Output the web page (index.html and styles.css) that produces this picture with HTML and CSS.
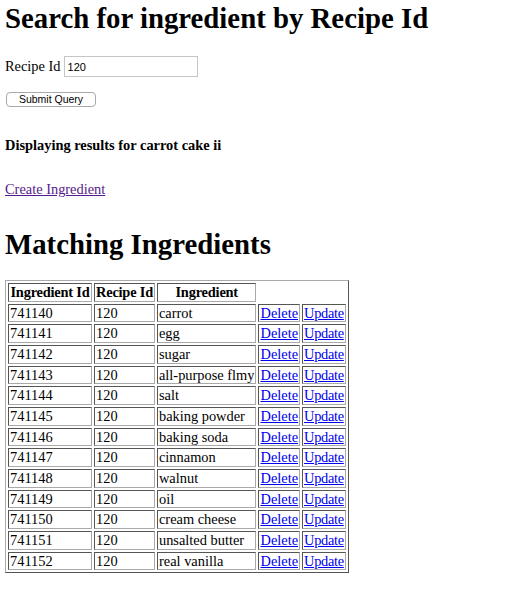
FILE: index.html
```html
<!DOCTYPE html>
<html>
<head>
<meta charset="utf-8">
<title>Search for ingredient by Recipe Id</title>
<link rel="stylesheet" href="styles.css">
</head>
<body>
<h1 class="title">Search for ingredient by Recipe Id</h1>
<form class="search">
  <div class="query-row">
    <label class="label" for="recipeId">Recipe Id</label>
    <input class="field" id="recipeId" type="text" value="120">
  </div>
  <button class="submit" type="button">Submit Query</button>
</form>
<h4 class="status">Displaying results for carrot cake ii</h4>
<p class="create"><a class="visited" href="#">Create Ingredient</a></p>
<h1 class="matching">Matching Ingredients</h1>
<table class="results">
  <colgroup>
    <col class="c1"><col class="c2"><col class="c3"><col class="c4"><col class="c5">
  </colgroup>
  <tr><th>Ingredient Id</th><th>Recipe Id</th><th>Ingredient</th></tr>
  <tr><td>741140</td><td>120</td><td>carrot</td><td><a href="#">Delete</a></td><td><a href="#">Update</a></td></tr>
  <tr><td>741141</td><td>120</td><td>egg</td><td><a href="#">Delete</a></td><td><a href="#">Update</a></td></tr>
  <tr><td>741142</td><td>120</td><td>sugar</td><td><a href="#">Delete</a></td><td><a href="#">Update</a></td></tr>
  <tr><td>741143</td><td>120</td><td>all-purpose flmy</td><td><a href="#">Delete</a></td><td><a href="#">Update</a></td></tr>
  <tr><td>741144</td><td>120</td><td>salt</td><td><a href="#">Delete</a></td><td><a href="#">Update</a></td></tr>
  <tr><td>741145</td><td>120</td><td>baking powder</td><td><a href="#">Delete</a></td><td><a href="#">Update</a></td></tr>
  <tr><td>741146</td><td>120</td><td>baking soda</td><td><a href="#">Delete</a></td><td><a href="#">Update</a></td></tr>
  <tr><td>741147</td><td>120</td><td>cinnamon</td><td><a href="#">Delete</a></td><td><a href="#">Update</a></td></tr>
  <tr><td>741148</td><td>120</td><td>walnut</td><td><a href="#">Delete</a></td><td><a href="#">Update</a></td></tr>
  <tr><td>741149</td><td>120</td><td>oil</td><td><a href="#">Delete</a></td><td><a href="#">Update</a></td></tr>
  <tr><td>741150</td><td>120</td><td>cream cheese</td><td><a href="#">Delete</a></td><td><a href="#">Update</a></td></tr>
  <tr><td>741151</td><td>120</td><td>unsalted butter</td><td><a href="#">Delete</a></td><td><a href="#">Update</a></td></tr>
  <tr><td>741152</td><td>120</td><td>real vanilla</td><td><a href="#">Delete</a></td><td><a href="#">Update</a></td></tr>
</table>
</body>
</html>
```
FILE: styles.css
```css
html, body {
  background: #ffffff;
}
body {
  margin: 0 5px;
  font-family: "Liberation Serif", "Times New Roman", serif;
  font-size: 14.4px;
  color: #000000;
}
.title {
  font-size: 28.8px;
  line-height: 33px;
  font-weight: bold;
  margin: 2px 0 0;
}
.search {
  margin: 0;
}
.query-row {
  display: flex;
  align-items: center;
  gap: 3px;
  margin-top: 21px;
  height: 21px;
}
.label {
  line-height: 17px;
}
.field {
  box-sizing: border-box;
  width: 134px;
  height: 21px;
  margin: 0;
  padding: 0 3px;
  border: 1px solid #c6c6c6;
  font-family: "Liberation Sans", Arial, sans-serif;
  font-size: 11px;
  color: #000;
  background: #fff;
}
.submit {
  display: block;
  box-sizing: border-box;
  width: 90px;
  height: 15px;
  margin: 15px 0 0 1px;
  padding: 0;
  border: 1px solid #a9a9a9;
  border-radius: 4px;
  background: #ffffff;
  font-family: "Liberation Sans", Arial, sans-serif;
  font-size: 10.5px;
  line-height: 13px;
  color: #000;
}
.status {
  font-size: 14.4px;
  font-weight: bold;
  line-height: 17px;
  margin: 30px 0 0;
}
.create {
  line-height: 17px;
  margin: 27px 0 0;
}
.create a.visited {
  color: #551a8b;
}
.matching {
  font-size: 28.8px;
  line-height: 33px;
  font-weight: bold;
  margin: 30px 0 0;
}
.results {
  margin-top: 19px;
  border: 1px solid;
  border-color: #a9a9a9 #555555 #555555 #a9a9a9;
  border-spacing: 2px;
  line-height: 14.65px;
}
.results th,
.results td {
  border: 1px solid;
  border-color: #555555 #a9a9a9 #a9a9a9 #555555;
  padding: 1px;
  text-align: left;
  white-space: nowrap;
}
.results th {
  text-align: center;
  font-weight: bold;
  letter-spacing: -0.2px;
}
.results a {
  color: #0000ee;
}
.results td:last-child a {
  letter-spacing: -0.3px;
}
.c1 { width: 84px; }
.c2 { width: 60px; }
.c3 { width: 98px; }
```
